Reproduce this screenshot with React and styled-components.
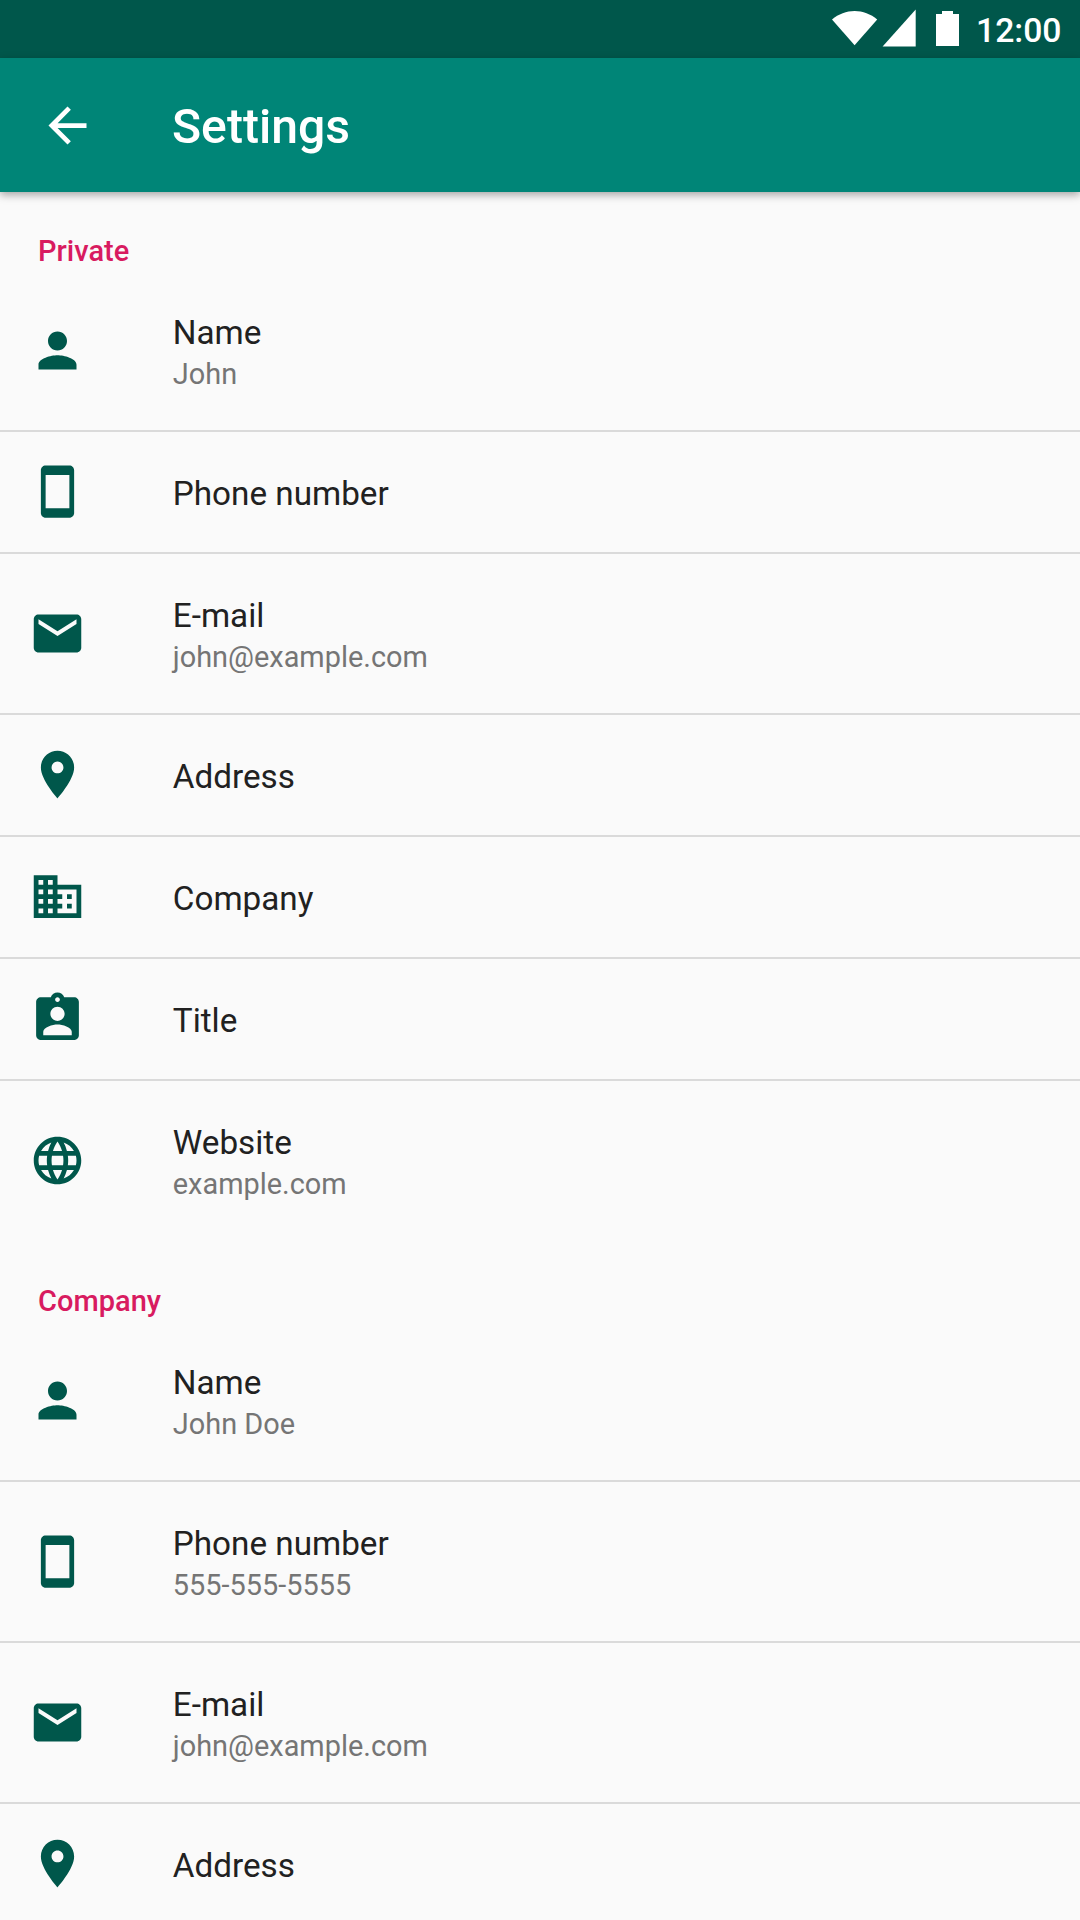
import React from "react";
import styled, { createGlobalStyle } from "styled-components";

const GlobalStyle = createGlobalStyle`
  * { box-sizing: border-box; }
  body {
    margin: 0;
    background: #fafafa;
    font-family: Roboto, "Noto Sans", sans-serif;
  }
`;

const Screen = styled.div`
  display: flex;
  flex-direction: column;
  width: 1080px;
  height: 1920px;
  overflow: hidden;
  background: #fafafa;
`;

const StatusBar = styled.div`
  display: flex;
  flex: none;
  align-items: flex-start;
  height: 58px;
  padding-left: 832px;
  background: #00574b;
  color: #fff;
`;

const StatusIcons = styled.svg`
  display: block;
  flex: none;
  width: 128px;
  height: 58px;
  fill: #fff;
`;

const Clock = styled.span`
  margin: 11px 0 0 16px;
  font-size: 33.7px;
  font-weight: 500;
  line-height: 40px;
`;

const AppBar = styled.header`
  display: flex;
  flex: none;
  align-items: center;
  height: 134px;
  padding-left: 39px;
  background: #008577;
  box-shadow: 0 3px 8px rgba(0, 0, 0, 0.34);
  z-index: 1;
`;

const BackIcon = styled.svg`
  flex: none;
  width: 57px;
  height: 57px;
  fill: #fff;
`;

const PageTitle = styled.h1`
  margin: 4px 0 0 76px;
  color: #fff;
  font-size: 48.1px;
  font-weight: 500;
  line-height: 58px;
`;

const SectionHeader = styled.h2`
  height: 79px;
  margin: 0;
  padding: 42px 0 0 38.1px;
  color: #d81b60;
  font-size: 29px;
  font-weight: 500;
  line-height: 34px;
`;

const List = styled.ul`
  margin: 0;
  padding: 0;
  list-style: none;
`;

const Row = styled.li`
  display: flex;
  height: ${(p) => (p.$tall ? 161 : 122)}px;
  padding-left: 29px;
  border-bottom: 2px solid #dadada;

  &:last-child {
    border-bottom-color: transparent;
  }
`;

const RowIcon = styled.svg`
  flex: none;
  width: 57px;
  height: 57px;
  margin-top: ${(p) => (p.$tall ? 51 : 31)}px;
  fill: #00574b;
`;

const Labels = styled.div`
  display: flex;
  flex-direction: column;
  padding: 42px 0 0 86.8px;
`;

const Title = styled.span`
  color: #212121;
  font-size: 33.25px;
  line-height: 40px;
`;

const Summary = styled.span`
  color: #757575;
  font-size: 28.9px;
  line-height: 38px;
  padding-top: 2px;
`;

const icons = {
  person:
    "M12 12c2.21 0 4-1.79 4-4s-1.79-4-4-4-4 1.79-4 4 1.79 4 4 4zm0 2c-2.67 0-8 1.34-8 4v2h16v-2c0-2.66-5.33-4-8-4z",
  phone:
    "M17 1.01L7 1c-1.1 0-2 .9-2 2v18c0 1.1.9 2 2 2h10c1.1 0 2-.9 2-2V3c0-1.1-.9-1.99-2-1.99zM17 19H7V5h10v14z",
  mail: "M20 4H4c-1.1 0-1.99.9-1.99 2L2 18c0 1.1.9 2 2 2h16c1.1 0 2-.9 2-2V6c0-1.1-.9-2-2-2zm0 4l-8 5-8-5V6l8 5 8-5v2z",
  place:
    "M12 2C8.13 2 5 5.13 5 9c0 5.25 7 13 7 13s7-7.75 7-13c0-3.87-3.13-7-7-7zm0 9.5c-1.38 0-2.5-1.12-2.5-2.5s1.12-2.5 2.5-2.5 2.5 1.12 2.5 2.5-1.12 2.5-2.5 2.5z",
  company:
    "M12 7V3H2v18h20V7H12zM6 19H4v-2h2v2zm0-4H4v-2h2v2zm0-4H4V9h2v2zm0-4H4V5h2v2zm4 12H8v-2h2v2zm0-4H8v-2h2v2zm0-4H8V9h2v2zm0-4H8V5h2v2zm10 12h-8v-2h2v-2h-2v-2h2v-2h-2V9h8v10zm-2-8h-2v2h2v-2zm0 4h-2v2h2v-2z",
  badge:
    "M19 3h-4.18C14.4 1.84 13.3 1 12 1c-1.3 0-2.4.84-2.82 2H5c-1.1 0-2 .9-2 2v14c0 1.1.9 2 2 2h14c1.1 0 2-.9 2-2V5c0-1.1-.9-2-2-2zm-7 0c.55 0 1 .45 1 1s-.45 1-1 1-1-.45-1-1 .45-1 1-1zm0 4c1.66 0 3 1.34 3 3s-1.34 3-3 3-3-1.34-3-3 1.34-3 3-3zm6 12H6v-1.4c0-2 4-3.1 6-3.1s6 1.1 6 3.1V19z",
  globe:
    "M11.99 2C6.47 2 2 6.48 2 12s4.47 10 9.99 10C17.52 22 22 17.52 22 12S17.52 2 11.99 2zm6.93 6h-2.95c-.32-1.25-.78-2.45-1.38-3.56 1.84.63 3.37 1.91 4.33 3.56zM12 4.04c.83 1.2 1.48 2.53 1.91 3.96h-3.82c.43-1.43 1.08-2.76 1.91-3.96zM4.26 14C4.1 13.36 4 12.69 4 12s.1-1.36.26-2h3.38c-.08.66-.14 1.32-.14 2 0 .68.06 1.34.14 2H4.26zm.82 2h2.95c.32 1.25.78 2.45 1.38 3.56-1.84-.63-3.37-1.9-4.33-3.56zm2.95-8H5.08c.96-1.66 2.49-2.93 4.33-3.56C8.81 5.55 8.35 6.75 8.03 8zM12 19.96c-.83-1.2-1.48-2.53-1.91-3.96h3.82c-.43 1.43-1.08 2.76-1.91 3.96zM14.34 14H9.66c-.09-.66-.16-1.32-.16-2 0-.68.07-1.35.16-2h4.68c.09.65.16 1.32.16 2 0 .68-.07 1.34-.16 2zm.25 5.56c.6-1.11 1.06-2.31 1.38-3.56h2.95c-.96 1.65-2.49 2.93-4.33 3.56zM16.36 14c.08-.66.14-1.32.14-2 0-.68-.06-1.34-.14-2h3.38c.16.64.26 1.31.26 2s-.1 1.36-.26 2h-3.38z",
};

const sections = [
  {
    name: "Private",
    items: [
      { icon: "person", title: "Name", summary: "John" },
      { icon: "phone", title: "Phone number" },
      { icon: "mail", title: "E-mail", summary: "john@example.com" },
      { icon: "place", title: "Address" },
      { icon: "company", title: "Company" },
      { icon: "badge", title: "Title" },
      { icon: "globe", title: "Website", summary: "example.com" },
    ],
  },
  {
    name: "Company",
    items: [
      { icon: "person", title: "Name", summary: "John Doe" },
      { icon: "phone", title: "Phone number", summary: "555-555-5555" },
      { icon: "mail", title: "E-mail", summary: "john@example.com" },
      { icon: "place", title: "Address" },
    ],
  },
];

export default function App() {
  return (
    <Screen>
      <GlobalStyle />
      <StatusBar>
        <StatusIcons viewBox="832 0 128 58" aria-hidden="true">
          <path d="M832 19.5C838.5 14 846.5 11 854.6 11S870.7 14 877.2 19.5L854.6 45.2Z" />
          <path d="M882.6 46.4L915.7 9.5V46.4Z" />
          <path d="M936 14H942V11H953V14H959V46H936Z" />
        </StatusIcons>
        <Clock>12:00</Clock>
      </StatusBar>
      <AppBar>
        <BackIcon viewBox="0 0 24 24" aria-label="Back">
          <path d="M20 11H7.83l5.59-5.59L12 4l-8 8 8 8 1.41-1.41L7.83 13H20v-2z" />
        </BackIcon>
        <PageTitle>Settings</PageTitle>
      </AppBar>
      {sections.map((section) => (
        <section key={section.name}>
          <SectionHeader>{section.name}</SectionHeader>
          <List>
            {section.items.map((item) => (
              <Row key={item.title} $tall={Boolean(item.summary)}>
                <RowIcon
                  viewBox="0 0 24 24"
                  aria-hidden="true"
                  $tall={Boolean(item.summary)}
                >
                  <path d={icons[item.icon]} />
                </RowIcon>
                <Labels>
                  <Title>{item.title}</Title>
                  {item.summary && <Summary>{item.summary}</Summary>}
                </Labels>
              </Row>
            ))}
          </List>
        </section>
      ))}
    </Screen>
  );
}
